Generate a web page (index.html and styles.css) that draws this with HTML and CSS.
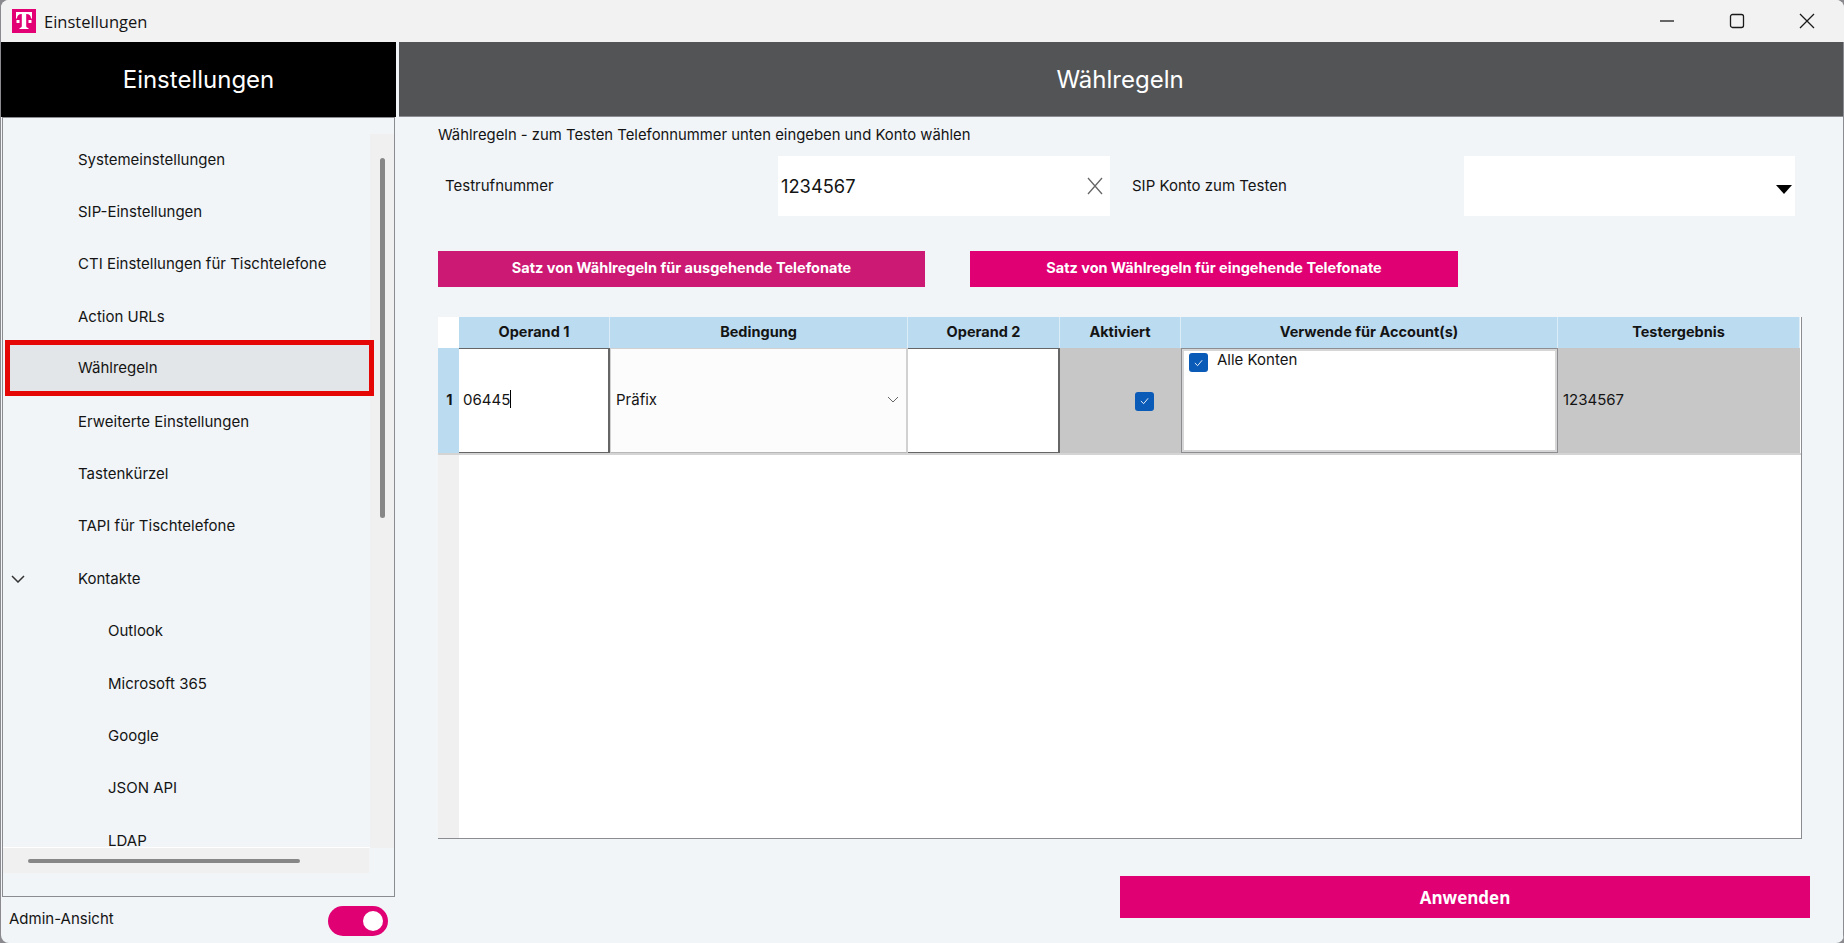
FILE: index.html
```html
<!DOCTYPE html>
<html lang="de">

<head>
    <meta charset="UTF-8">
    <meta name="viewport" content="width=device-width, initial-scale=1.0">
    <title>Einstellungen</title>
    <link rel="stylesheet" href="styles.css">
</head>

<body>
    <div class="window">
        <header class="titlebar">
            <svg class="logo" viewBox="0 0 24 24">
                <rect width="24" height="24" fill="#e20074" />
                <path fill="#fff" d="M4 3h16v6.500h-1c0-2.600-1.500-4.500-4.800-4.500V17c0 1.200.5 1.800 2.300 1.900V20H7.500v-1.100c1.800-.1 2.300-.7 2.300-1.900V5C6.500 5 5 6.900 5 9.500H4z" />
                <rect x="4.500" y="11" width="3" height="3" fill="#fff" />
                <rect x="16.500" y="11" width="3" height="3" fill="#fff" />
            </svg>
            <span class="titlebar-text">Einstellungen</span>
            <div class="window-buttons">
                <svg viewBox="0 0 16 16"><path d="M1 8h14" /></svg>
                <svg viewBox="0 0 16 16"><rect x="1.500" y="1.500" width="13" height="13" rx="2" /></svg>
                <svg viewBox="0 0 16 16"><path d="M1 1l14 14M15 1L1 15" /></svg>
            </div>
        </header>

        <div class="content">
            <aside class="sidebar">
                <div class="sidebar-head">Einstellungen</div>
                <div class="sidebar-panel">
                    <div class="nav-area">
                        <ul class="nav-list">
                            <li class="nav-item">Systemeinstellungen</li>
                            <li class="nav-item">SIP-Einstellungen</li>
                            <li class="nav-item">CTI Einstellungen für Tischtelefone</li>
                            <li class="nav-item">Action URLs</li>
                            <li class="nav-item selected">Wählregeln</li>
                            <li class="nav-item">Erweiterte Einstellungen</li>
                            <li class="nav-item">Tastenkürzel</li>
                            <li class="nav-item">TAPI für Tischtelefone</li>
                            <li class="nav-item">
                                <svg class="nav-chevron" viewBox="0 0 14 8"><path d="M1 1l6 6 6-6" /></svg>
                                Kontakte
                            </li>
                            <li class="nav-item sub">Outlook</li>
                            <li class="nav-item sub">Microsoft 365</li>
                            <li class="nav-item sub">Google</li>
                            <li class="nav-item sub">JSON API</li>
                            <li class="nav-item sub">LDAP</li>
                        </ul>
                        <div class="vscroll">
                            <div class="vscroll-thumb"></div>
                        </div>
                    </div>
                    <div class="hscroll">
                        <div class="hscroll-thumb"></div>
                    </div>
                </div>
                <div class="sidebar-foot">
                    <span>Admin-Ansicht</span>
                    <div class="toggle">
                        <div class="toggle-knob"></div>
                    </div>
                </div>
            </aside>

            <main class="main">
                <div class="main-head">Wählregeln</div>
                <div class="main-body">
                    <p class="hint">Wählregeln - zum Testen Telefonnummer unten eingeben und Konto wählen</p>

                    <div class="test-row">
                        <label class="test-label">Testrufnummer</label>
                        <div class="test-input">
                            <span>1234567</span>
                            <svg class="clear-icon" viewBox="0 0 16 18"><path d="M1 1l14 16M15 1L1 17" /></svg>
                        </div>
                        <label class="test-label sip">SIP Konto zum Testen</label>
                        <div class="test-select">
                            <div class="select-arrow"></div>
                        </div>
                    </div>

                    <div class="set-buttons">
                        <button class="set-btn active">Satz von Wählregeln für ausgehende Telefonate</button>
                        <button class="set-btn">Satz von Wählregeln für eingehende Telefonate</button>
                    </div>

                    <div class="rules">
                        <div class="rules-grid">
                            <div class="corner"></div>
                            <div class="th">Operand 1</div>
                            <div class="th">Bedingung</div>
                            <div class="th">Operand 2</div>
                            <div class="th">Aktiviert</div>
                            <div class="th">Verwende für Account(s)</div>
                            <div class="th">Testergebnis</div>

                            <div class="row-head">1</div>
                            <div class="td edit"><span>06445</span><i class="caret"></i></div>
                            <div class="td combo">
                                <span>Präfix</span>
                                <svg class="combo-chevron" viewBox="0 0 12 7"><path d="M1 1l5 5 5-5" /></svg>
                            </div>
                            <div class="td edit"></div>
                            <div class="td grey check-cell">
                                <div class="checkbox">
                                    <svg viewBox="0 0 10 8"><path d="M1 4l3 3 5-6" /></svg>
                                </div>
                            </div>
                            <div class="td accounts">
                                <div class="checkbox">
                                    <svg viewBox="0 0 10 8"><path d="M1 4l3 3 5-6" /></svg>
                                </div>
                                <span>Alle Konten</span>
                            </div>
                            <div class="td grey result">1234567</div>
                        </div>
                        <div class="rules-rest">
                            <div class="rest-gutter"></div>
                        </div>
                    </div>

                    <div class="apply-row">
                        <button class="apply-btn">Anwenden</button>
                    </div>
                </div>
            </main>
        </div>
    </div>
</body>

</html>
```

FILE: styles.css
```css
* {
    box-sizing: border-box;
}

html,
body {
    height: 100%;
}

body {
    margin: 0;
    overflow: hidden;
    background: hsl(240, 2%, 55%);
    font-family: Inter, "Liberation Sans", sans-serif;
    font-size: 15px;
    color: hsl(0, 0%, 8%);
}

.window {
    height: 943px;
    width: 1843px;
    margin-left: 1px;
    display: flex;
    flex-direction: column;
    overflow: hidden;
    border-radius: 8px;
    background: hsl(210, 33%, 96%);
}

/* title bar */
.titlebar {
    height: 42px;
    flex: none;
    display: flex;
    align-items: center;
    padding-left: 11px;
    background: hsl(0, 0%, 95%);
}

.logo {
    width: 24px;
    height: 24px;
}

.titlebar-text {
    margin-left: 8px;
    font-family: "Open Sans", sans-serif;
    font-size: 16.500px;
}

.window-buttons {
    margin-left: auto;
    display: flex;
    align-items: center;
    gap: 54px;
    padding-right: 29px;
}

.window-buttons svg {
    width: 16px;
    height: 16px;
    fill: none;
    stroke: hsl(0, 0%, 10%);
    stroke-width: 1.300;
}

.content {
    flex: 1;
    display: flex;
    min-height: 0;
}

/* left side */
.sidebar {
    width: 398px;
    flex: none;
    display: flex;
    flex-direction: column;
}

.sidebar-head {
    height: 75px;
    flex: none;
    margin-right: 3px;
    display: flex;
    align-items: center;
    justify-content: center;
    background: #000;
    color: #fff;
    font-size: 24px;
}

.sidebar-panel {
    height: 780px;
    flex: none;
    margin: 0 4px 0 1px;
    display: flex;
    flex-direction: column;
    border: 1px solid hsl(240, 3%, 56%);
}

.nav-area {
    height: 730px;
    flex: none;
    display: flex;
}

.nav-list {
    flex: 1;
    list-style: none;
    margin: 0;
    padding: 15px 0 0 0;
    overflow-x: visible;
    overflow-y: clip;
    position: relative;
    z-index: 1;
    border-bottom: 1px solid #fff;
}

.nav-item {
    height: 52.400px;
    display: flex;
    align-items: center;
    padding-left: 75px;
    position: relative;
}

.nav-item.sub {
    padding-left: 105px;
}

.nav-item.selected {
    height: 56.400px;
    margin: -3px -4px -1px 2px;
    padding-left: 68px;
    border: 5px solid hsl(0, 95%, 46%);
    background: hsl(210, 9%, 90%);
}

.nav-chevron {
    position: absolute;
    left: 8px;
    top: 23px;
    width: 14px;
    height: 8px;
    fill: none;
    stroke: hsl(0, 0%, 20%);
    stroke-width: 1.500;
}

.vscroll {
    width: 24px;
    flex: none;
    margin-top: 16px;
    background: hsl(0, 0%, 94%);
    padding: 24px 0 0 10px;
}

.vscroll-thumb {
    width: 5px;
    height: 360px;
    border-radius: 3px;
    background: hsl(0, 0%, 53%);
}

.hscroll {
    width: 366px;
    height: 25px;
    flex: none;
    padding: 11px 0 0 25px;
    background: hsl(0, 0%, 94%);
}

.hscroll-thumb {
    width: 272px;
    height: 4px;
    border-radius: 2px;
    background: hsl(0, 0%, 53%);
}

.sidebar-foot {
    flex: 1;
    display: flex;
    align-items: center;
    justify-content: space-between;
    padding: 0 11px 4px 8px;
}

.toggle {
    width: 60px;
    height: 30px;
    margin-top: 5px;
    padding: 5px 5px 0 0;
    display: flex;
    justify-content: flex-end;
    border-radius: 15px;
    background: hsl(329, 100%, 44%);
}

.toggle-knob {
    width: 20px;
    height: 20px;
    border-radius: 50%;
    background: #fff;
}

/* right side */
.main {
    flex: 1;
    display: flex;
    flex-direction: column;
    min-width: 0;
    border-right: 1px solid hsl(240, 3%, 56%);
}

.main-head {
    height: 75px;
    flex: none;
    display: flex;
    align-items: center;
    justify-content: center;
    padding-right: 2px;
    background: hsl(220, 2%, 33%);
    border-bottom: 1px solid hsl(240, 3%, 56%);
    color: #fff;
    font-size: 24px;
}

.main-body {
    flex: 1;
    padding: 0 0 0 39px;
}

.hint {
    margin: 0;
    height: 39px;
    padding-bottom: 4px;
    display: flex;
    align-items: center;
    font-size: 14.850px;
}

.test-row {
    height: 60px;
    display: flex;
    align-items: center;
}

.test-label {
    width: 340px;
    padding: 0 0 2px 7px;
}

.test-label.sip {
    width: 354px;
    padding-left: 22px;
}

.test-input {
    width: 332px;
    height: 60px;
    display: flex;
    align-items: center;
    justify-content: space-between;
    padding: 0 7px 0 3px;
    background: #fff;
    font-size: 18.300px;
}

.clear-icon {
    width: 16px;
    height: 18px;
    fill: none;
    stroke: hsl(0, 0%, 40%);
    stroke-width: 1.300;
}

.test-select {
    width: 331px;
    height: 60px;
    display: flex;
    align-items: center;
    justify-content: flex-end;
    padding: 7px 3px 0 0;
    background: #fff;
}

.select-arrow {
    border-left: 8px solid transparent;
    border-right: 8px solid transparent;
    border-top: 9px solid #000;
}

.set-buttons {
    display: flex;
    gap: 45px;
    margin-top: 35px;
}

.set-btn,
.apply-btn {
    border: 0;
    color: #fff;
    font-family: inherit;
    font-weight: 700;
    background: hsl(329, 100%, 44%);
}

.set-btn {
    width: 488px;
    height: 36px;
    padding: 0 0 4px 0;
    font-size: 14.500px;
}

.set-btn.active {
    width: 487px;
    background: hsl(330, 78%, 45%);
}

.rules {
    width: 1364px;
    height: 522px;
    margin-top: 30px;
    display: flex;
    flex-direction: column;
    background: #fff;
    border-right: 1px solid hsl(240, 3%, 56%);
    border-bottom: 1px solid hsl(240, 3%, 56%);
}

.rules-grid {
    display: grid;
    grid-template-columns: 21px 151px 298px 152px 121px 377px 242px;
    grid-template-rows: 31px 105px;
    border-bottom: 2px solid hsl(0, 0%, 83%);
}

.corner {
    background: #fff;
}

.th {
    display: flex;
    align-items: center;
    justify-content: center;
    padding-bottom: 2px;
    background: hsl(205, 66%, 84%);
    border-right: 1px solid hsl(205, 66%, 92%);
    font-size: 14.500px;
    font-weight: 700;
}

.row-head {
    display: flex;
    align-items: center;
    justify-content: center;
    padding: 0 0 3px 2px;
    background: hsl(205, 66%, 84%);
    font-size: 14.500px;
    font-weight: 700;
}

.td {
    display: flex;
    align-items: center;
    padding: 0 0 3px 4px;
}

.edit {
    background: #fff;
    border-top: 1px solid hsl(0, 0%, 40%);
    border-bottom: 1px solid hsl(0, 0%, 40%);
    border-right: 2px solid hsl(0, 0%, 40%);
}

.caret {
    width: 1px;
    height: 18px;
    background: #000;
}

.combo {
    justify-content: space-between;
    padding-left: 5px;
    padding-right: 7px;
    background: hsl(0, 0%, 99%);
    border: 1px solid hsl(0, 0%, 82%);
    border-right-width: 2px;
    border-bottom-color: hsl(0, 0%, 72%);
}

.combo-chevron {
    width: 12px;
    height: 7px;
    fill: none;
    stroke: hsl(0, 0%, 40%);
    stroke-width: 1;
}

.grey {
    background: hsl(0, 0%, 78%);
}

.result {
    padding-left: 5px;
}

.check-cell {
    justify-content: flex-end;
    padding: 1px 27px 0 0;
}

.checkbox {
    width: 19px;
    height: 19px;
    flex: none;
    display: flex;
    align-items: center;
    justify-content: center;
    border-radius: 3px;
    background: hsl(212, 90%, 38%);
}

.checkbox svg {
    width: 9px;
    height: 8px;
    fill: none;
    stroke: #fff;
    stroke-width: 1;
}

.accounts {
    align-items: flex-start;
    gap: 9px;
    padding: 3px 0 0 7px;
    background: #fff;
    border: 1px solid hsl(240, 2%, 56%);
    box-shadow: inset 0 0 0 2px hsl(0, 0%, 84%);
}

.accounts span {
    line-height: 15px;
}

.accounts .checkbox {
    margin-top: 1px;
}

.rules-rest {
    flex: 1;
    display: flex;
}

.rest-gutter {
    width: 21px;
    background: hsl(0, 0%, 94%);
}

.apply-row {
    display: flex;
    justify-content: flex-end;
    width: 1372px;
    margin-top: 37px;
}

.apply-btn {
    width: 690px;
    height: 42px;
    font-family: "Open Sans", sans-serif;
    font-size: 17px;
}
```
